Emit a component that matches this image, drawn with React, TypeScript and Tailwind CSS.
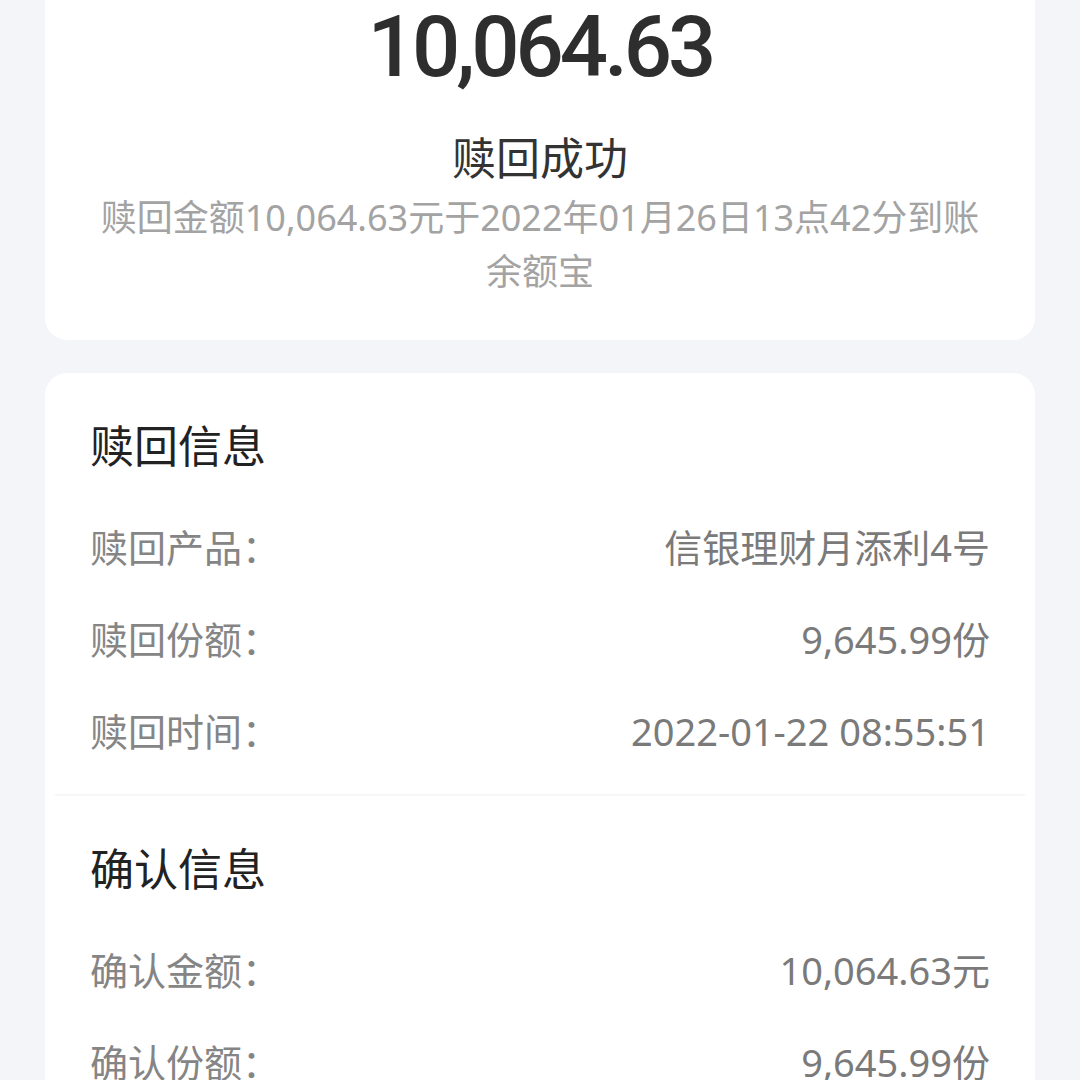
import React from 'react';

const font = { fontFamily: "'Noto Sans', 'Noto Sans CJK SC', sans-serif" };

const redeemRows = [
    { label: '赎回产品：', value: '信银理财月添利4号' },
    { label: '赎回份额：', value: '9,645.99份' },
    { label: '赎回时间：', value: '2022-01-22 08:55:51' },
];

const confirmRows = [
    { label: '确认金额：', value: '10,064.63元' },
    { label: '确认份额：', value: '9,645.99份' },
];

function InfoRow({ label, value }: { label: string; value: string }) {
    return (
        <div className="flex items-center justify-between h-[92px] text-[38px] leading-[92px]">
            <span className="text-[#858585]">{label}</span>
            <span className="text-[#7a7a7a]">{value}</span>
        </div>
    );
}

export default function App() {
    return (
        <div className="h-[1080px] overflow-hidden bg-[#f4f5f9] px-[45px]" style={font}>
            {/* result card, top is scrolled off screen */}
            <div className="bg-white rounded-b-[22px] pt-[4px] pb-[41px] flex flex-col items-center">
                <div
                    className="text-[85px] leading-[86px] font-medium tracking-[-4px] text-[#2e2e2e]"
                    style={{ fontFamily: "Roboto, 'Noto Sans', sans-serif" }}
                >
                    10,064.63
                </div>
                <div className="mt-[38px] text-[44px] leading-[60px] text-[#333333]">赎回成功</div>
                <div className="mt-[3px] text-[36px] leading-[54px] text-[#a3a3a3] text-center">
                    <div>赎回金额10,064.63元于2022年01月26日13点42分到账</div>
                    <div>余额宝</div>
                </div>
            </div>

            <div className="mt-[33px] bg-white rounded-[22px] pt-[43px]">
                <div className="px-[45px]">
                    <div className="text-[44px] leading-[60px] text-[#222222]">赎回信息</div>
                    <div className="mt-[25px]">
                        {redeemRows.map((r) => (
                            <InfoRow key={r.label} label={r.label} value={r.value} />
                        ))}
                    </div>
                </div>
                <div className="mt-[17px] mx-[10px] h-[2px] bg-[#f5f6f8]" />
                <div className="px-[45px] pt-[43px]">
                    <div className="text-[44px] leading-[60px] text-[#222222]">确认信息</div>
                    <div className="mt-[25px]">
                        {confirmRows.map((r) => (
                            <InfoRow key={r.label} label={r.label} value={r.value} />
                        ))}
                    </div>
                </div>
            </div>
        </div>
    );
}
